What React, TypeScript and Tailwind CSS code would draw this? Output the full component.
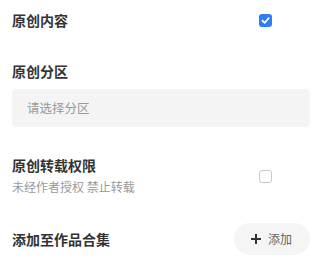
import React from "react";

const font = { fontFamily: '"Noto Sans CJK SC", "Noto Sans", sans-serif' };

function Checked() {
  return (
    <div className="w-[13px] h-[13px] rounded-[3px] bg-[#2f7cf6] flex items-center justify-center">
      <svg width="9" height="9" viewBox="0 0 10 10" fill="none">
        <path d="M1.5 5.2 L4 7.6 L8.6 2.4" stroke="#fff" strokeWidth="1.9" strokeLinecap="round" strokeLinejoin="round" />
      </svg>
    </div>
  );
}

function Unchecked() {
  return <div className="w-[13px] h-[13px] rounded-[3px] border border-[#c8c8c8] bg-white" />;
}

export default function App() {
  return (
    <div className="w-[322px] h-[271px] bg-white px-[12px] overflow-hidden" style={font}>
      <div className="h-[40px] flex items-center">
        <div className="w-[247px] text-[14px] leading-[20px] font-bold text-[#333]">原创内容</div>
        <Checked />
      </div>
      <div className="mt-[21px] text-[14px] leading-[20px] font-bold text-[#333]">原创分区</div>
      <div className="mt-[8px] h-[38px] rounded-[4px] bg-[#f4f4f4] flex items-center pl-[15px] text-[12.5px] text-[#999]">
        请选择分区
      </div>
      <div className="mt-[28px] flex items-center">
        <div className="w-[247px]">
          <div className="text-[14px] leading-[20px] font-bold text-[#333]">原创转载权限</div>
          <div className="mt-[4px] text-[12px] leading-[16px] text-[#999]">未经作者授权 禁止转载</div>
        </div>
        <div className="mt-[2px]">
          <Unchecked />
        </div>
      </div>
      <div className="mt-[28px] h-[32px] flex items-center justify-between">
        <div className="text-[14px] leading-[20px] font-bold text-[#333]">添加至作品合集</div>
        <div className="w-[76px] h-[32px] rounded-full bg-[#f5f5f5] flex items-center pl-[16px] gap-[6px]">
          <svg width="12" height="12" viewBox="0 0 12 12">
            <path d="M6 1v10M1 6h10" stroke="#333" strokeWidth="2" />
          </svg>
          <span className="text-[12px] leading-[16px] text-[#666]">添加</span>
        </div>
      </div>
    </div>
  );
}
